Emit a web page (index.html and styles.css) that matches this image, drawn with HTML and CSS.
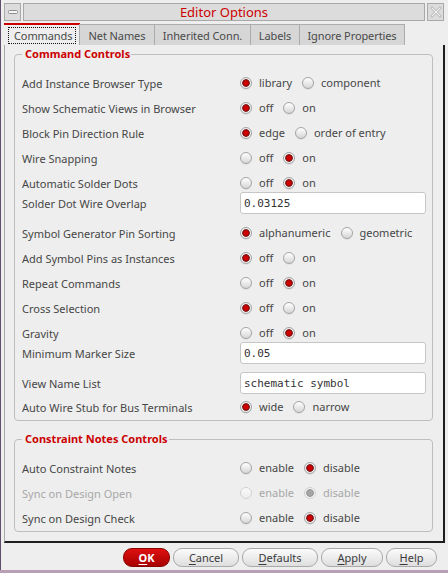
FILE: index.html
```html
<!DOCTYPE html>
<html>
<head>
<meta charset="utf-8">
<link rel="stylesheet" href="styles.css">
</head>
<body>
<div class="window">
  <div class="titlebar">
    <div class="tb-btn"><svg width="10" height="5" viewBox="0 0 10 5"><rect x="0.5" y="0.5" width="9" height="3" rx="1" fill="#f6f6f6" stroke="#8e8e8e"/></svg></div>
    <div class="title">Editor Options</div>
    <div class="tb-btn"><svg width="12" height="12" viewBox="0 0 12 12"><path d="M2 2 L10 10 M10 2 L2 10" stroke="#c4c4c4" stroke-width="3" stroke-linecap="square"/><path d="M2 2 L10 10 M10 2 L2 10" stroke="#f4f4f4" stroke-width="1"/></svg></div>
  </div>
  <div class="tabs">
    <div class="tab active"><span class="focus">Commands</span></div>
    <div class="tab t-net">Net Names</div>
    <div class="tab t-inh">Inherited Conn.</div>
    <div class="tab t-lab">Labels</div>
    <div class="tab t-ign">Ignore Properties</div>
  </div>
  <div class="panel">
    <fieldset class="group first">
      <legend>Command Controls</legend>
      <div class="rows">
        <div class="row"><span class="label">Add Instance Browser Type</span><div class="opts"><span class="opt"><span class="radio on"></span>library</span><span class="opt"><span class="radio"></span>component</span></div></div>
        <div class="row"><span class="label">Show Schematic Views in Browser</span><div class="opts"><span class="opt"><span class="radio on"></span>off</span><span class="opt"><span class="radio"></span>on</span></div></div>
        <div class="row"><span class="label">Block Pin Direction Rule</span><div class="opts"><span class="opt"><span class="radio on"></span>edge</span><span class="opt"><span class="radio"></span>order of entry</span></div></div>
        <div class="row"><span class="label">Wire Snapping</span><div class="opts"><span class="opt"><span class="radio"></span>off</span><span class="opt"><span class="radio on"></span>on</span></div></div>
        <div class="row"><span class="label">Automatic Solder Dots</span><div class="opts"><span class="opt"><span class="radio"></span>off</span><span class="opt"><span class="radio on"></span>on</span></div></div>
        <div class="row field"><span class="label">Solder Dot Wire Overlap</span><div class="input">0.03125</div></div>
        <div class="row"><span class="label">Symbol Generator Pin Sorting</span><div class="opts"><span class="opt"><span class="radio on"></span>alphanumeric</span><span class="opt"><span class="radio"></span>geometric</span></div></div>
        <div class="row"><span class="label">Add Symbol Pins as Instances</span><div class="opts"><span class="opt"><span class="radio on"></span>off</span><span class="opt"><span class="radio"></span>on</span></div></div>
        <div class="row"><span class="label">Repeat Commands</span><div class="opts"><span class="opt"><span class="radio"></span>off</span><span class="opt"><span class="radio on"></span>on</span></div></div>
        <div class="row"><span class="label">Cross Selection</span><div class="opts"><span class="opt"><span class="radio on"></span>off</span><span class="opt"><span class="radio"></span>on</span></div></div>
        <div class="row"><span class="label">Gravity</span><div class="opts"><span class="opt"><span class="radio"></span>off</span><span class="opt"><span class="radio on"></span>on</span></div></div>
        <div class="row field"><span class="label">Minimum Marker Size</span><div class="input">0.05</div></div>
        <div class="row field flush"><span class="label">View Name List</span><div class="input">schematic symbol</div></div>
        <div class="row"><span class="label">Auto Wire Stub for Bus Terminals</span><div class="opts"><span class="opt"><span class="radio on"></span>wide</span><span class="opt"><span class="radio"></span>narrow</span></div></div>
      </div>
    </fieldset>
    <fieldset class="group second">
      <legend>Constraint Notes Controls</legend>
      <div class="rows">
        <div class="row"><span class="label">Auto Constraint Notes</span><div class="opts"><span class="opt"><span class="radio"></span>enable</span><span class="opt"><span class="radio on"></span>disable</span></div></div>
        <div class="row disabled"><span class="label">Sync on Design Open</span><div class="opts"><span class="opt"><span class="radio"></span>enable</span><span class="opt"><span class="radio on"></span>disable</span></div></div>
        <div class="row"><span class="label">Sync on Design Check</span><div class="opts"><span class="opt"><span class="radio"></span>enable</span><span class="opt"><span class="radio on"></span>disable</span></div></div>
      </div>
    </fieldset>
  </div>
  <div class="buttons">
    <div class="btn ok"><u>O</u>K</div>
    <div class="btn cancel"><u>C</u>ancel</div>
    <div class="btn defaults"><u>D</u>efaults</div>
    <div class="btn apply"><u>A</u>pply</div>
    <div class="btn help"><u>H</u>elp</div>
  </div>
</div>
</body>
</html>
```
FILE: styles.css
```css
* { box-sizing: border-box; }
html, body { margin: 0; padding: 0; }
body {
  width: 448px;
  height: 573px;
  overflow: hidden;
  background: #b89fb6;
  font-family: "Noto Sans", "DejaVu Sans", sans-serif;
  font-size: 11px;
  color: #464646;
}
.window {
  width: 448px;
  height: 570px;
  background: #eeeeee;
  border-left: 1px solid #5e4e6c;
  padding: 3px 4px 0 3px;
  display: flex;
  flex-direction: column;
}
.titlebar {
  display: flex;
  gap: 2px;
  height: 18px;
  flex: none;
}
.tb-btn {
  width: 17px;
  border: 1px solid #a8a8a8;
  background: #dcdcdc;
  display: flex;
  align-items: center;
  justify-content: center;
}
.title {
  flex: 1;
  border: 1px solid #a8a8a8;
  background: #dcdcdc;
  color: #cc0000;
  font-size: 13px;
  line-height: 16px;
  text-align: center;
}
.tabs {
  display: flex;
  align-items: flex-end;
  height: 22px;
  margin-top: 2px;
  flex: none;
}
.tab {
  height: 21px;
  background: #d6d6d6;
  border: 1px solid #acacac;
  border-bottom: none;
  display: flex;
  align-items: center;
  justify-content: center;
  color: #4a4a4a;
  white-space: nowrap;
  letter-spacing: -0.1px;
}
.tab + .tab { margin-left: -1px; }
.tab.t-net { width: 76px; }
.tab.t-inh { width: 97px; }
.tab.t-lab { width: 50px; }
.tab.t-ign { width: 106px; }
.tab.active {
  height: 22px;
  width: 76px;
  background: #eeeeee;
  border: none;
  border-top: 2px solid #cc0000;
  padding: 2px 0 0 4px;
  align-items: flex-start;
  justify-content: flex-start;
}
.focus {
  border: 1px dotted #111;
  height: 17px;
  padding: 0 3px 0 5px;
  display: flex;
  align-items: center;
}
.panel {
  flex: none;
  height: 498px;
  margin-right: -1px;
  border-left: 1px solid #a8a8a8;
  border-right: 2px solid #1e1e1e;
  border-bottom: 2px solid #1e1e1e;
  padding: 2px 10px 0 9px;
}
.group {
  margin: 0;
  min-width: 0;
  border: 1px solid #bebebe;
  border-radius: 4px;
  padding: 9px 6px 1px 7px;
}
.group.second { margin-top: 11px; }
.group legend {
  padding: 0 1px 0 3px;
  line-height: 14px;
  font-weight: bold;
  color: #cc0000;
}
.rows {
  display: flex;
  flex-direction: column;
}
.row {
  display: grid;
  grid-template-columns: 218px 1fr;
  align-items: center;
  height: 25px;
}
.row.field {
  height: 22px;
  margin-top: -3px;
  margin-bottom: 6px;
}
.row.field + .row.field { margin-top: 2px; }
.row.field.flush { margin-bottom: 0; }
.label { white-space: nowrap; padding-top: 2px; }
.row.field .label { padding-top: 0; }
.opts {
  display: flex;
  gap: 10px;
}
.opt {
  display: flex;
  align-items: center;
  gap: 7px;
  white-space: nowrap;
}
.radio {
  width: 12px;
  height: 12px;
  border-radius: 50%;
  border: 1px solid #a4a4a4;
  background: linear-gradient(#ffffff, #d6d6d6);
  box-shadow: 0 1px 0 rgba(0,0,0,0.06);
}
.radio.on {
  background: radial-gradient(circle at 50% 50%, #d00000 0, #cc0000 2.2px, #6e1010 3.4px, #f2f2f2 4.2px, #d8d8d8 100%);
}
.disabled { color: #a8a8a8; }
.disabled .radio {
  border-color: #d2d2d2;
  background: linear-gradient(#fafafa, #ececec);
  box-shadow: none;
}
.disabled .radio.on {
  background: radial-gradient(circle at 50% 50%, #a0a0a0 0, #a8a8a8 2.4px, #8c8c8c 3.4px, #f4f4f4 4.2px, #e6e6e6 100%);
}
.input {
  height: 22px;
  border: 1px solid #c6c6c6;
  border-radius: 3px;
  background: #ffffff;
  font-family: "DejaVu Sans Mono", monospace;
  font-size: 11px;
  color: #333333;
  padding-left: 3px;
  display: flex;
  align-items: center;
}
.buttons {
  display: flex;
  justify-content: flex-end;
  gap: 3px;
  padding: 5px 7px 0 0;
}
.btn {
  height: 19px;
  border: 1px solid #a9a9a9;
  border-radius: 9px;
  background: linear-gradient(#fbfbfb, #dedede);
  display: flex;
  align-items: center;
  justify-content: center;
  color: #3a3a3a;
}
.btn u { text-decoration-thickness: 1px; text-underline-offset: 2px; }
.btn.ok {
  width: 47px;
  background: linear-gradient(#de1010, #a80000);
  border-color: #8a0000;
  color: #ffffff;
  font-weight: bold;
}
.btn.cancel { width: 66px; }
.btn.defaults { width: 76px; }
.btn.apply { width: 62px; }
.btn.help { width: 51px; }
```
